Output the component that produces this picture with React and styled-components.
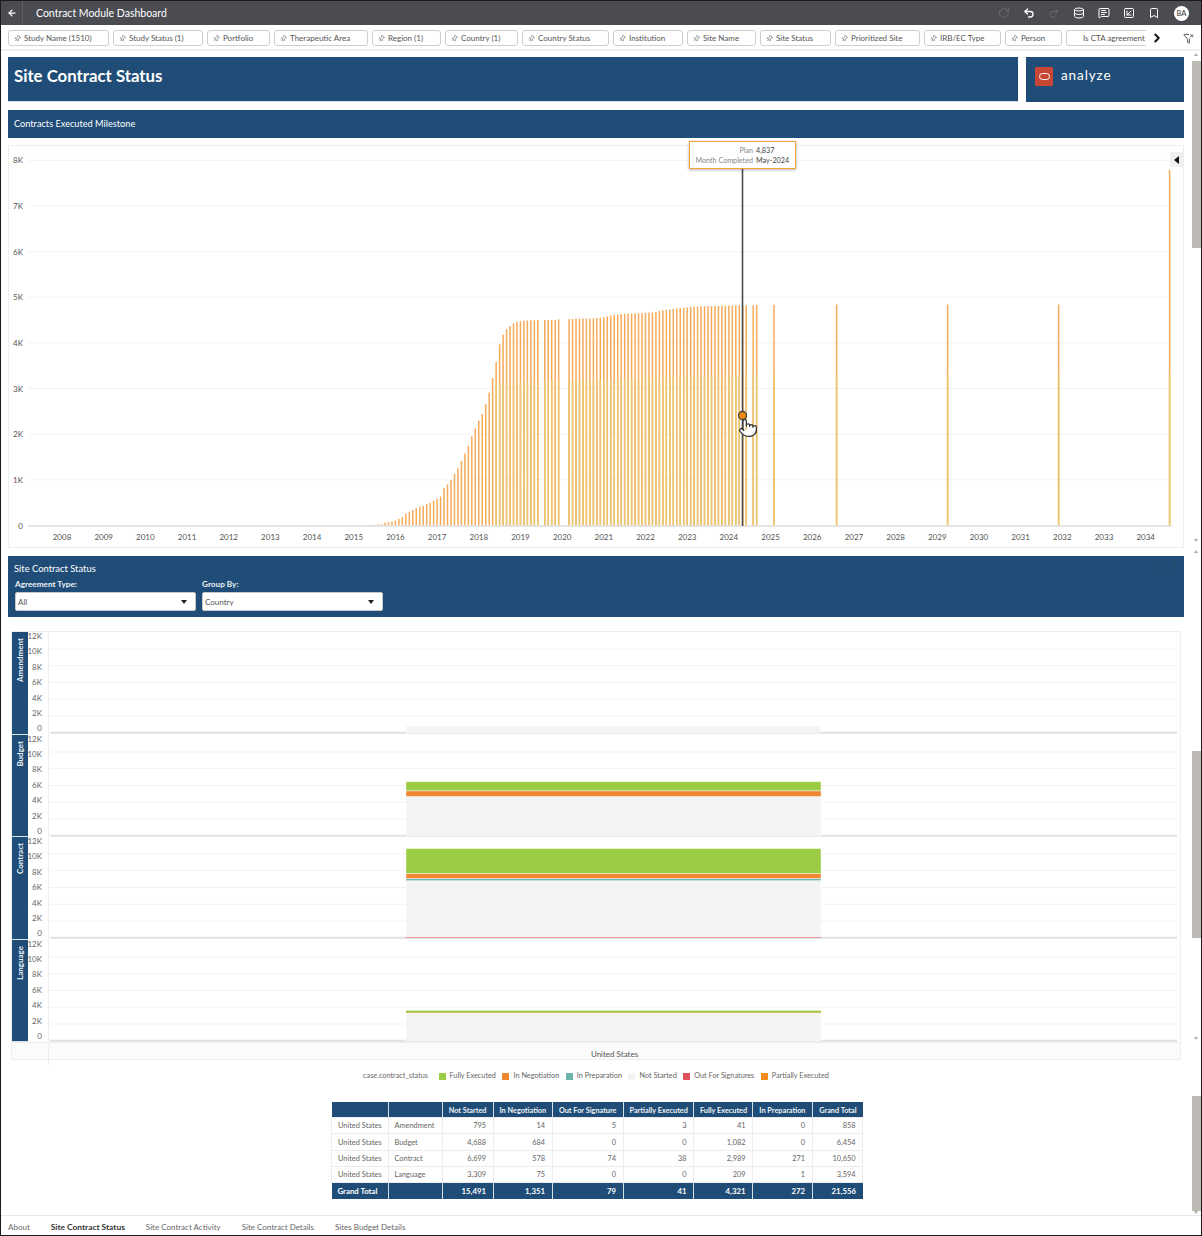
import React from "react";
import styled, { createGlobalStyle } from "styled-components";
import {
  ArrowLeft,
  ChevronRight,
  Database,
  EllipsisVertical,
  FunnelX,
  Bookmark,
  MessageSquareText,
  Pin,
  Pointer,
  Redo2,
  RotateCw,
  Scan,
  SquareArrowDownLeft,
  Undo2,
} from "lucide-react";

const NAVY = "#1f4d78";
const FONT = `Lato, "Noto Sans", sans-serif`;

const GlobalStyle = createGlobalStyle`
  html, body { margin: 0; padding: 0; background: #fff; }
  body { font-family: ${FONT}; color: #555; }
  * { box-sizing: border-box; }
`;

const filters = [
  { label: "Study Name (1510)", w: 101 },
  { label: "Study Status (1)", w: 90 },
  { label: "Portfolio", w: 63 },
  { label: "Therapeutic Area", w: 94 },
  { label: "Region (1)", w: 69 },
  { label: "Country (1)", w: 73 },
  { label: "Country Status", w: 87 },
  { label: "Institution", w: 70 },
  { label: "Site Name", w: 69 },
  { label: "Site Status", w: 71 },
  { label: "Prioritized Site", w: 85 },
  { label: "IRB/EC Type", w: 77 },
  { label: "Person", w: 57 },
];

// milestone curve, read off as [x, y] in a 3x crop starting at (360, 280)
const curve = [
  [30, 735], [62, 733], [72, 728], [92, 725], [103, 722], [114, 717], [125, 711], [135, 701],
  [145, 696], [156, 690], [166, 684], [177, 680], [187, 678], [197, 673], [208, 669], [218, 662],
  [229, 657], [240, 650], [250, 625], [260, 614], [270, 602], [281, 582], [292, 565], [302, 544],
  [312, 522], [323, 498], [334, 468], [344, 446], [354, 423], [365, 402], [375, 373], [386, 337],
  [396, 295], [406, 249], [416, 196], [427, 165], [437, 148], [448, 138], [458, 130], [468, 126],
  [478, 124], [489, 122], [510, 121], [531, 120], [583, 120], [594, 118], [700, 115], [720, 113],
  [760, 105], [800, 101], [850, 99], [880, 97], [900, 92], [950, 85], [1000, 80], [1050, 78],
  [1137, 76], [1250, 74],
];

const curveAt = (x) => {
  for (let i = 1; i < curve.length; i++) {
    if (x <= curve[i][0]) {
      const [x0, y0] = curve[i - 1];
      const [x1, y1] = curve[i];
      return y0 + ((y1 - y0) * (x - x0)) / (x1 - x0);
    }
  }
  return 74;
};

const skipped = [49, 55, 56, 109, 112, 113, 114, 115];
const monthBars = Array.from({ length: 117 }, (_, i) => i)
  .filter((i) => !skipped.includes(i))
  .map((i) => {
    const zx = 31.5 + 10.42 * i;
    return { x: 360.6 + zx / 3, top: 280 + curveAt(zx) / 3, ghost: zx > 400 ? 383.5 - ((zx - 400) / 740) * 9 : null };
  });
const lateBars = [
  { x: 836.6, top: 304.5 },
  { x: 947.6, top: 304.5 },
  { x: 1058.6, top: 304.5 },
  { x: 1169.6, top: 170 },
];

const years = Array.from({ length: 27 }, (_, i) => 2008 + i);

const MilestoneChart = () => (
  <svg width="1174" height="401" viewBox="9 146 1174 401" style={{ display: "block" }}>
    {[0, 1, 2, 3, 4, 5, 6, 7, 8].map((k) => {
      const y = 525.5 - k * 45.65;
      return (
        <g key={k}>
          {k > 0 && <line x1="28" x2="1170" y1={y} y2={y} stroke="#f3f3f3" strokeWidth="1" />}
          <text x="23" y={y + 3} textAnchor="end" fontSize="8" fill="#555" fontFamily={FONT}>
            {k === 0 ? "0" : `${k}K`}
          </text>
        </g>
      );
    })}
    {monthBars.map((b) => (
      <g key={b.x}>
        <rect x={b.x - 0.75} y={b.top} width="1.5" height={525.5 - b.top} fill="#f6ab58" />
        {b.ghost && b.ghost > b.top && (
          <rect x={b.x - 0.75} y={b.ghost} width="1.5" height={525.5 - b.ghost} fill="#ebc56f" />
        )}
      </g>
    ))}
    {lateBars.map((b) => (
      <g key={b.x}>
        <rect x={b.x - 0.75} y={b.top} width="1.5" height={525.5 - b.top} fill="#f6ab58" />
        <rect x={b.x - 0.75} y="374" width="1.5" height="151.5" fill="#ebc56f" />
      </g>
    ))}
    <line x1="28" x2="1172" y1="526" y2="526" stroke="#dcdcdc" strokeWidth="1.6" />
    {years.map((year, i) => (
      <text key={year} x={62 + i * 41.68} y="539.5" textAnchor="middle" fontSize="8" fill="#555" fontFamily={FONT}>
        {year}
      </text>
    ))}
    <line x1="742.5" x2="742.5" y1="167" y2="526" stroke="#4c4c4c" strokeWidth="1.6" />
    <circle cx="742.5" cy="415.5" r="4" fill="#f08a12" stroke="#444" strokeWidth="1.3" />
    <Pointer x="738" y="416" width="20" height="24" fill="#fff" stroke="#333" strokeWidth="1.5" />
  </svg>
);

const segmentColors = {
  red: "#e0505a",
  partial: "#f68b1f",
  gray: "#f4f4f4",
  teal: "#6fb3ae",
  orange: "#f0862d",
  green: "#9ccc44",
};

const trellis = [
  { label: "Amendment", segments: [["gray", 795], ["orange", 14], ["green", 41]] },
  { label: "Budget", segments: [["gray", 4688], ["orange", 684], ["green", 1082]] },
  { label: "Contract", segments: [["red", 74], ["partial", 38], ["gray", 6699], ["teal", 271], ["orange", 578], ["green", 2989]] },
  { label: "Language", segments: [["gray", 3309], ["orange", 75], ["green", 209]] },
];

const axisLabels = ["12K", "10K", "8K", "6K", "4K", "2K", "0"];

const TrellisPlot = ({ segments }) => {
  const base = 100.7;
  let y = base;
  const rects = segments.map(([color, value]) => {
    const h = (value / 1000) * 8.375;
    y -= h;
    return { color, y, h };
  });
  return (
    <svg width="1130" height="102" style={{ display: "block" }}>
      {[1, 2, 3, 4, 5].map((n) => (
        <line key={n} x1="1" x2="1128" y1={base - n * 16.75} y2={base - n * 16.75} stroke="#f2f2f2" strokeWidth="1" />
      ))}
      <line x1="1" x2="1128" y1={base} y2={base} stroke="#e0e0e0" strokeWidth="2" />
      {rects
        .filter((r) => r.h > 0.5)
        .map((r) => (
          <rect
            key={r.color}
            x="357"
            y={r.y}
            width="415"
            height={r.h}
            fill={segmentColors[r.color]}
            stroke={r.h > 2 ? "rgba(255,255,255,0.45)" : "none"}
            strokeWidth="1"
          />
        ))}
    </svg>
  );
};

const legend = [
  { label: "Fully Executed", color: "#9ccc44" },
  { label: "In Negotiation", color: "#f0862d" },
  { label: "In Preparation", color: "#6fb3ae" },
  { label: "Not Started", color: "#f4f4f4" },
  { label: "Out For Signatures", color: "#e0505a" },
  { label: "Partially Executed", color: "#f68b1f" },
];

const columnWidths = [56.5, 54, 51, 59, 71, 70.5, 59, 59.5, 50.5];
const headers = ["", "", "Not Started", "In Negotiation", "Out For Signature", "Partially Executed", "Fully Executed", "In Preparation", "Grand Total"];
const rows = [
  ["United States", "Amendment", "795", "14", "5", "3", "41", "0", "858"],
  ["United States", "Budget", "4,688", "684", "0", "0", "1,082", "0", "6,454"],
  ["United States", "Contract", "6,699", "578", "74", "38", "2,989", "271", "10,650"],
  ["United States", "Language", "3,309", "75", "0", "0", "209", "1", "3,594"],
];
const totals = ["Grand Total", "", "15,491", "1,351", "79", "41", "4,321", "272", "21,556"];

const tabs = ["About", "Site Contract Status", "Site Contract Activity", "Site Contract Details", "Sites Budget Details"];

const thumbs = [
  { top: 10, height: 187 },
  { top: 700, height: 187 },
  { top: 1045, height: 115 },
];
const arrows = [
  { top: 2, dir: "up" },
  { top: 488, dir: "down" },
  { top: 499, dir: "up" },
  { top: 986, dir: "down" },
  { top: 1160, dir: "down" },
];

export default function App() {
  return (
    <Frame>
      <GlobalStyle />
      <TopBar>
        <BackButton>
          <ArrowLeft size={10} strokeWidth={3} color="#fff" />
        </BackButton>
        <AppTitle>Contract Module Dashboard</AppTitle>
        <ToolGroup>
          <ToolIcon $dim><RotateCw size={12} /></ToolIcon>
          <ToolIcon><Undo2 size={12} strokeWidth={2.6} /></ToolIcon>
          <ToolIcon $dim><Redo2 size={12} /></ToolIcon>
          <ToolIcon><Database size={12} /></ToolIcon>
          <ToolIcon><MessageSquareText size={12} /></ToolIcon>
          <ToolIcon><SquareArrowDownLeft size={12} /></ToolIcon>
          <ToolIcon><Bookmark size={12} /></ToolIcon>
          <Avatar>BA</Avatar>
        </ToolGroup>
      </TopBar>

      <FilterBar>
        <ChipRow>
          {filters.map((f) => (
            <Chip key={f.label} $w={f.w}>
              <Pin size={7} color="#666" style={{ transform: "rotate(40deg)" }} />
              {f.label}
            </Chip>
          ))}
          <ClippedChip>Is CTA agreement</ClippedChip>
        </ChipRow>
        <ChevronSlot>
          <ChevronRight size={14} strokeWidth={3.4} color="#111" />
        </ChevronSlot>
        <FunnelSlot>
          <FunnelX size={11} color="#444" />
        </FunnelSlot>
      </FilterBar>

      <Body>
        <Main>
          <HeaderRow>
            <TitlePanel>Site Contract Status</TitlePanel>
            <LogoPanel>
              <LogoMark><LogoRing /></LogoMark>
              <LogoText>analyze</LogoText>
            </LogoPanel>
          </HeaderRow>

          <SectionBar>Contracts Executed Milestone</SectionBar>

          <ChartPanel>
            <MilestoneChart />
            <Tooltip>
              <TipLabel>Plan</TipLabel>
              <TipValue>4,837</TipValue>
              <TipLabel>Month Completed</TipLabel>
              <TipValue>May-2024</TipValue>
            </Tooltip>
            <CollapseButton />
          </ChartPanel>

          <StatusPanel>
            <StatusTitle>Site Contract Status</StatusTitle>
            <PanelActions>
              <Scan size={12} />
              <EllipsisVertical size={12} />
            </PanelActions>
            <SelectRow>
              <SelectField>
                <SelectLabel>Agreement Type:</SelectLabel>
                <SelectBox>All<SelectCaret /></SelectBox>
              </SelectField>
              <SelectField>
                <SelectLabel>Group By:</SelectLabel>
                <SelectBox>Country<SelectCaret /></SelectBox>
              </SelectField>
            </SelectRow>
          </StatusPanel>

          <Trellis>
            {trellis.map((row) => (
              <TrellisRow key={row.label}>
                <RowLabel><span>{row.label}</span></RowLabel>
                <AxisColumn>
                  {axisLabels.map((a) => <span key={a}>{a}</span>)}
                </AxisColumn>
                <TrellisPlot segments={row.segments} />
              </TrellisRow>
            ))}
            <TrellisFooter>
              <FooterCorner />
              <FooterCell>United States</FooterCell>
            </TrellisFooter>
          </Trellis>

          <Legend>
            <LegendTitle>case.contract_status</LegendTitle>
            {legend.map((l) => (
              <LegendItem key={l.label}>
                <Swatch $color={l.color} />
                {l.label}
              </LegendItem>
            ))}
          </Legend>

          <DataTable>
            <colgroup>
              {columnWidths.map((w, i) => <col key={i} style={{ width: w }} />)}
            </colgroup>
            <thead>
              <tr>
                {headers.map((h, i) => <HeadCell key={i}>{h}</HeadCell>)}
              </tr>
            </thead>
            <tbody>
              {rows.map((row) => (
                <tr key={row[1]}>
                  {row.map((v, i) => <Cell key={i} $num={i > 1}>{v}</Cell>)}
                </tr>
              ))}
              <tr>
                {totals.map((v, i) => <TotalCell key={i} $num={i > 1}>{v}</TotalCell>)}
              </tr>
            </tbody>
          </DataTable>
        </Main>

        <ScrollTrack>
          {thumbs.map((t) => <Thumb key={t.top} $top={t.top} $h={t.height} />)}
          {arrows.map((a) => <ScrollArrow key={a.top} $top={a.top} $dir={a.dir} />)}
        </ScrollTrack>
      </Body>

      <TabBar>
        {tabs.map((t) => (
          <Tab key={t} $active={t === "Site Contract Status"}>{t}</Tab>
        ))}
      </TabBar>
    </Frame>
  );
}

const Frame = styled.div`
  width: 1202px;
  height: 1236px;
  border: 1px solid #1c1c1c;
  display: flex;
  flex-direction: column;
  overflow: hidden;
  background: #fff;
`;

const TopBar = styled.div`
  height: 24px;
  flex: none;
  background: #4a4c52;
  display: flex;
  align-items: center;
`;

const BackButton = styled.div`
  width: 22px;
  height: 100%;
  display: flex;
  align-items: center;
  justify-content: center;
  border-right: 1px solid #5b5d63;
`;

const AppTitle = styled.div`
  margin-left: 13px;
  color: #fff;
  font-size: 10.5px;
`;

const ToolGroup = styled.div`
  margin-left: auto;
  display: flex;
  align-items: center;
  padding-right: 12px;
`;

const ToolIcon = styled.div`
  width: 25px;
  display: flex;
  justify-content: center;
  color: ${(p) => (p.$dim ? "#696b70" : "#fff")};
`;

const Avatar = styled.div`
  width: 15px;
  height: 15px;
  margin-left: 8px;
  border-radius: 50%;
  background: #fff;
  color: #333;
  font-size: 7.5px;
  display: flex;
  align-items: center;
  justify-content: center;
`;

const FilterBar = styled.div`
  height: 26px;
  flex: none;
  display: flex;
  align-items: center;
  padding: 2px 0 0 7px;
  border-bottom: 2px solid #efefef;
`;

const ChipRow = styled.div`
  display: flex;
  gap: 4px;
`;

const Chip = styled.div`
  width: ${(p) => p.$w}px;
  height: 16px;
  padding-left: 5px;
  border: 1px solid #cfcfcf;
  border-radius: 3px;
  display: flex;
  align-items: center;
  gap: 3px;
  font-size: 8px;
  color: #555;
  white-space: nowrap;
`;

const ClippedChip = styled(Chip)`
  width: 80px;
  padding-left: 16px;
  border-right: none;
  border-radius: 3px 0 0 3px;
  overflow: hidden;
`;

const ChevronSlot = styled.div`
  margin-left: 4px;
  display: flex;
`;

const FunnelSlot = styled.div`
  margin-left: 19px;
  display: flex;
`;

const Body = styled.div`
  flex: 1;
  min-height: 0;
  display: flex;
`;

const Main = styled.div`
  width: 1186px;
  padding: 6px 3px 0 7px;
  display: flex;
  flex-direction: column;
  align-items: stretch;
`;

const HeaderRow = styled.div`
  display: flex;
  gap: 8px;
  height: 45px;
`;

const TitlePanel = styled.div`
  flex: 1;
  background: ${NAVY};
  color: #fff;
  font-size: 16.8px;
  font-weight: 700;
  padding: 8px 6px;
  border: 1px solid #cfd9e3;
  border-width: 0 0 1px;
`;

const LogoPanel = styled.div`
  width: 158px;
  background: ${NAVY};
  display: flex;
  align-items: flex-start;
  padding: 10px 9px;
  gap: 8px;
`;

const LogoMark = styled.div`
  width: 18px;
  height: 19px;
  background: #c74634;
  border-radius: 1px;
  display: flex;
  align-items: center;
  justify-content: center;
`;

const LogoRing = styled.div`
  width: 11px;
  height: 7px;
  border: 1.5px solid #fff;
  border-radius: 4px;
`;

const LogoText = styled.div`
  color: #fff;
  font-size: 13.5px;
  letter-spacing: 0.9px;
  line-height: 16px;
`;

const SectionBar = styled.div`
  margin-top: 8px;
  height: 28px;
  background: ${NAVY};
  color: #fff;
  font-size: 9.2px;
  padding: 0 0 2px 6px;
  display: flex;
  align-items: center;
`;

const ChartPanel = styled.div`
  position: relative;
  margin-top: 7px;
  height: 403px;
  border: 1px solid #eeeeee;
`;

const Tooltip = styled.div`
  position: absolute;
  left: 680px;
  top: -5px;
  width: 107px;
  height: 28px;
  padding-top: 1px;
  background: #fff;
  border: 1.5px solid #f4a23c;
  box-shadow: 0 1px 3px rgba(0, 0, 0, 0.3);
  display: grid;
  grid-template-columns: 63px 1fr;
  column-gap: 3px;
  align-content: center;
  font-size: 7.2px;
  line-height: 10px;
`;

const TipLabel = styled.div`
  text-align: right;
  color: #888;
`;

const TipValue = styled.div`
  color: #444;
`;

const CollapseButton = styled.div`
  position: absolute;
  right: 0;
  top: 6px;
  width: 13px;
  height: 15px;
  background: #f0f0f0;
  display: flex;
  align-items: center;
  justify-content: center;

  &::before {
    content: "";
    border-style: solid;
    border-width: 4px 5px 4px 0;
    border-color: transparent #111 transparent transparent;
  }
`;

const StatusPanel = styled.div`
  position: relative;
  margin-top: 8px;
  height: 61px;
  background: ${NAVY};
  padding: 7px 7px 0 6px;
  color: #fff;
`;

const StatusTitle = styled.div`
  font-size: 9.4px;
  line-height: 11px;
`;

const PanelActions = styled.div`
  position: absolute;
  right: 4px;
  top: 5px;
  display: flex;
  gap: 5px;
  color: #33465c;
`;

const SelectRow = styled.div`
  display: flex;
  gap: 6px;
  margin-top: 6px;
  padding-left: 1px;
`;

const SelectField = styled.div`
  width: 181px;
`;

const SelectLabel = styled.div`
  font-size: 8.2px;
  font-weight: 700;
  line-height: 9px;
  color: #eef2f6;
`;

const SelectBox = styled.div`
  margin-top: 3px;
  height: 19px;
  background: #fff;
  border-radius: 2px;
  border: 1px solid #c8c8c8;
  color: #555;
  font-size: 8px;
  padding: 0 8px 0 2px;
  display: flex;
  align-items: center;
  justify-content: space-between;
`;

const SelectCaret = styled.span`
  border-style: solid;
  border-width: 4px 3px 0 3px;
  border-color: #222 transparent transparent transparent;
`;

const Trellis = styled.div`
  margin: 14px 0 0 3px;
  width: 1170px;
  height: 429px;
  border: 1px solid #eeeeee;
  border-bottom: none;
  display: flex;
  flex-direction: column;
`;

const TrellisRow = styled.div`
  height: 102.5px;
  display: grid;
  grid-template-columns: 16px 21px 1fr;
`;

const RowLabel = styled.div`
  background: ${NAVY};
  color: #eef2f6;
  font-size: 8px;
  font-weight: 700;
  display: flex;
  justify-content: center;
  align-items: flex-start;
  border-bottom: 1px solid #d9e1e9;
  padding-top: 6px;

  span {
    writing-mode: vertical-rl;
    transform: rotate(180deg);
  }
`;

const AxisColumn = styled.div`
  display: flex;
  flex-direction: column;
  justify-content: space-between;
  align-items: flex-end;
  padding: 0 6px 1px 0;
  border-right: 1px solid #f0f0f0;
  font-size: 8px;
  line-height: 9px;
  color: #666;
`;

const TrellisFooter = styled.div`
  height: 18px;
  display: grid;
  grid-template-columns: 37px 1fr;
  border: 1px solid #eeeeee;
  border-width: 1px 0;
  background: #fbfbfb;
`;

const FooterCorner = styled.div`
  border-right: 1px solid #eeeeee;
`;

const FooterCell = styled.div`
  font-size: 8px;
  text-align: center;
  line-height: 22px;
  color: #555;
`;

const Legend = styled.div`
  margin-top: 11px;
  display: flex;
  justify-content: center;
  align-items: center;
  gap: 6.5px;
  font-size: 7.3px;
  line-height: 10px;
  color: #666;
`;

const LegendTitle = styled.div`
  margin-right: 4px;
`;

const LegendItem = styled.div`
  display: flex;
  align-items: center;
  gap: 4px;
`;

const Swatch = styled.span`
  width: 7px;
  height: 7px;
  background: ${(p) => p.$color};
`;

const DataTable = styled.table`
  margin: 21px 0 0 323px;
  width: 531px;
  table-layout: fixed;
  border-collapse: collapse;
  font-size: 7.4px;
`;

const HeadCell = styled.th`
  height: 15.6px;
  background: ${NAVY};
  color: #eef2f6;
  font-weight: 700;
  font-size: 7.3px;
  text-align: right;
  padding: 1px 6px 0;
  border-left: 1px solid #d5dde5;
  white-space: nowrap;

  &:first-child {
    border-left: none;
  }
`;

const Cell = styled.td`
  height: 16.3px;
  padding: 0 6.5px 0 6px;
  color: #666;
  text-align: ${(p) => (p.$num ? "right" : "left")};
  border: 1px solid #ececec;
  white-space: nowrap;
`;

const TotalCell = styled.td`
  height: 16.5px;
  padding: 0 6.5px 0 6px;
  background: ${NAVY};
  color: #fff;
  font-size: 7.8px;
  font-weight: 700;
  text-align: ${(p) => (p.$num ? "right" : "left")};
  border-left: 1px solid #d5dde5;
  white-space: nowrap;

  &:first-child {
    border-left: none;
  }
`;

const ScrollTrack = styled.div`
  position: relative;
  flex: 1;
`;

const Thumb = styled.div`
  position: absolute;
  left: 5px;
  right: 0;
  top: ${(p) => p.$top}px;
  height: ${(p) => p.$h}px;
  background: #bdb9b5;
`;

const ScrollArrow = styled.div`
  position: absolute;
  left: 7px;
  top: ${(p) => p.$top}px;
  border-style: solid;
  border-width: ${(p) => (p.$dir === "up" ? "0 2.5px 3px 2.5px" : "3px 2.5px 0 2.5px")};
  border-color: ${(p) =>
    p.$dir === "up" ? "transparent transparent #aaa transparent" : "#aaa transparent transparent transparent"};
`;

const TabBar = styled.div`
  height: 20px;
  flex: none;
  display: flex;
  align-items: center;
  gap: 21px;
  padding: 3px 0 0 7px;
  border-top: 1px solid #e8e8e8;
`;

const Tab = styled.div`
  font-size: 8px;
  font-weight: ${(p) => (p.$active ? 700 : 400)};
  font-size: ${(p) => (p.$active ? "8.4px" : "8px")};
  color: ${(p) => (p.$active ? "#333" : "#666")};
`;
